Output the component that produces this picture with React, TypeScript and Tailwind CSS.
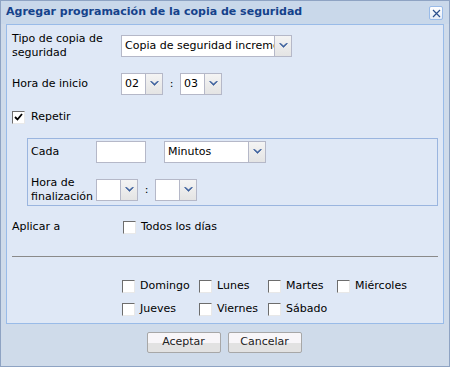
import React from "react";

const font = { fontFamily: '"DejaVu Sans", Verdana, sans-serif' };

function Arrow() {
  return (
    <svg width="9" height="6" viewBox="0 0 9 6">
      <path d="M0.5 0.5 L4.5 4.5 L8.5 0.5 L7 0.5 L4.5 3 L2 0.5 Z" fill="#3a5e9c" stroke="#3a5e9c" strokeWidth="0.6" />
    </svg>
  );
}

function Trigger() {
  return (
    <div className="w-[17px] h-full border-l border-[#b5b8c8] bg-gradient-to-b from-[#f4f4f4] to-[#e4e4e4] flex items-center justify-center">
      <Arrow />
    </div>
  );
}

function Select({ value, width }: { value?: string; width: string }) {
  return (
    <div className={`flex h-[22px] border border-[#b5b8c8] bg-white ${width}`}>
      <div className="flex-1 min-w-0 overflow-hidden whitespace-nowrap pl-[3px] leading-[20px] text-black">
        {value}
      </div>
      <Trigger />
    </div>
  );
}

function Check({ checked }: { checked?: boolean }) {
  return (
    <div className="w-[13px] h-[13px] shrink-0 bg-white border border-t-[#6d6d6d] border-l-[#6d6d6d] border-r-[#e8e8e8] border-b-[#e8e8e8] flex items-center justify-center">
      {checked && (
        <svg width="9" height="9" viewBox="0 0 9 9">
          <path d="M1 4 L3.5 6.5 L8 1" fill="none" stroke="#000" strokeWidth="1.8" />
        </svg>
      )}
    </div>
  );
}

function Day({ label, w }: { label: string; w: string }) {
  return (
    <div className={`flex items-center gap-[5px] h-[14px] ${w}`}>
      <Check />
      <span>{label}</span>
    </div>
  );
}

export default function App() {
  return (
    <div
      style={font}
      className="w-[450px] h-[367px] border border-[#8ea3c3] bg-[#cfdbea] text-[11px] text-black flex flex-col"
    >
      {/* Title */}
      <div className="h-[23px] flex items-center justify-between pl-[5px] pr-[6px] bg-[#c9d8ea]">
        <span className="font-bold text-[#15428b] text-[11px]">
          Agregar programación de la copia de seguridad
        </span>
        <div className="w-[14px] h-[14px] mt-[1px] rounded-[2px] border border-[#99bbe8] bg-gradient-to-b from-white to-[#e4ecf7] flex items-center justify-center">
          <svg width="9" height="9" viewBox="0 0 9 9">
            <path d="M1 1 L8 8 M8 1 L1 8" stroke="#2b4f8c" strokeWidth="1.2" />
          </svg>
        </div>
      </div>

      {/* Body */}
      <div className="mx-[5px] h-[300px] border border-[#99bbe8] bg-[#dfe8f6] pl-[5px] flex flex-col leading-[14px]">
        <div className="flex items-center mt-[7px]">
          <div className="w-[109px] leading-[14px]">
            Tipo de copia de
            <br />
            seguridad
          </div>
          <Select value="Copia de seguridad incremental" width="w-[171px]" />
        </div>

        <div className="flex items-center mt-[13px]">
          <div className="w-[109px]">Hora de inicio</div>
          <Select value="02" width="w-[42px]" />
          <span className="w-[17px] text-center">:</span>
          <Select value="03" width="w-[42px]" />
        </div>

        <div className="flex items-center gap-[6px] mt-[15px] h-[14px]">
          <Check checked />
          <span>Repetir</span>
        </div>

        <div className="ml-[15px] mr-[5px] mt-[14px] h-[68px] border border-[#9ab5df] pl-[3px] pt-[2px]">
          <div className="flex items-center">
            <div className="w-[65px]">Cada</div>
            <div className="w-[50px] h-[22px] border border-[#b5b8c8] bg-white" />
            <div className="ml-[18px]">
              <Select value="Minutos" width="w-[102px]" />
            </div>
          </div>
          <div className="flex items-center mt-[13px]">
            <div className="w-[65px]">
              Hora de
              <br />
              finalización
            </div>
            <Select width="w-[42px]" />
            <span className="w-[17px] text-center">:</span>
            <Select width="w-[42px]" />
          </div>
        </div>

        <div className="flex items-center mt-[14px] h-[14px]">
          <div className="w-[111px]">Aplicar a</div>
          <Check />
          <span className="ml-[5px]">Todos los días</span>
        </div>

        <div className="mt-[22px] mr-[5px] h-[1px] bg-[#8a8a8a]" />

        <div className="ml-[110px] mt-[22px] flex flex-col gap-[9px]">
          <div className="flex">
            <Day label="Domingo" w="w-[77px]" />
            <Day label="Lunes" w="w-[69px]" />
            <Day label="Martes" w="w-[69px]" />
            <Day label="Miércoles" w="w-[80px]" />
          </div>
          <div className="flex">
            <Day label="Jueves" w="w-[77px]" />
            <Day label="Viernes" w="w-[69px]" />
            <Day label="Sábado" w="w-[69px]" />
          </div>
        </div>
      </div>

      {/* Buttons */}
      <div className="flex justify-center gap-[7px] mt-[8px] pr-[2px]">
        {["Aceptar", "Cancelar"].map((b) => (
          <div
            key={b}
            className="w-[74px] h-[21px] rounded-[2px] border border-[#a7a7a7] bg-[linear-gradient(#f8f6f9_0%,#f8f6f9_55%,#e2e2e2_55%,#e2e2e2_100%)] flex items-center justify-center text-[11px] text-[#222]"
          >
            {b}
          </div>
        ))}
      </div>
    </div>
  );
}
